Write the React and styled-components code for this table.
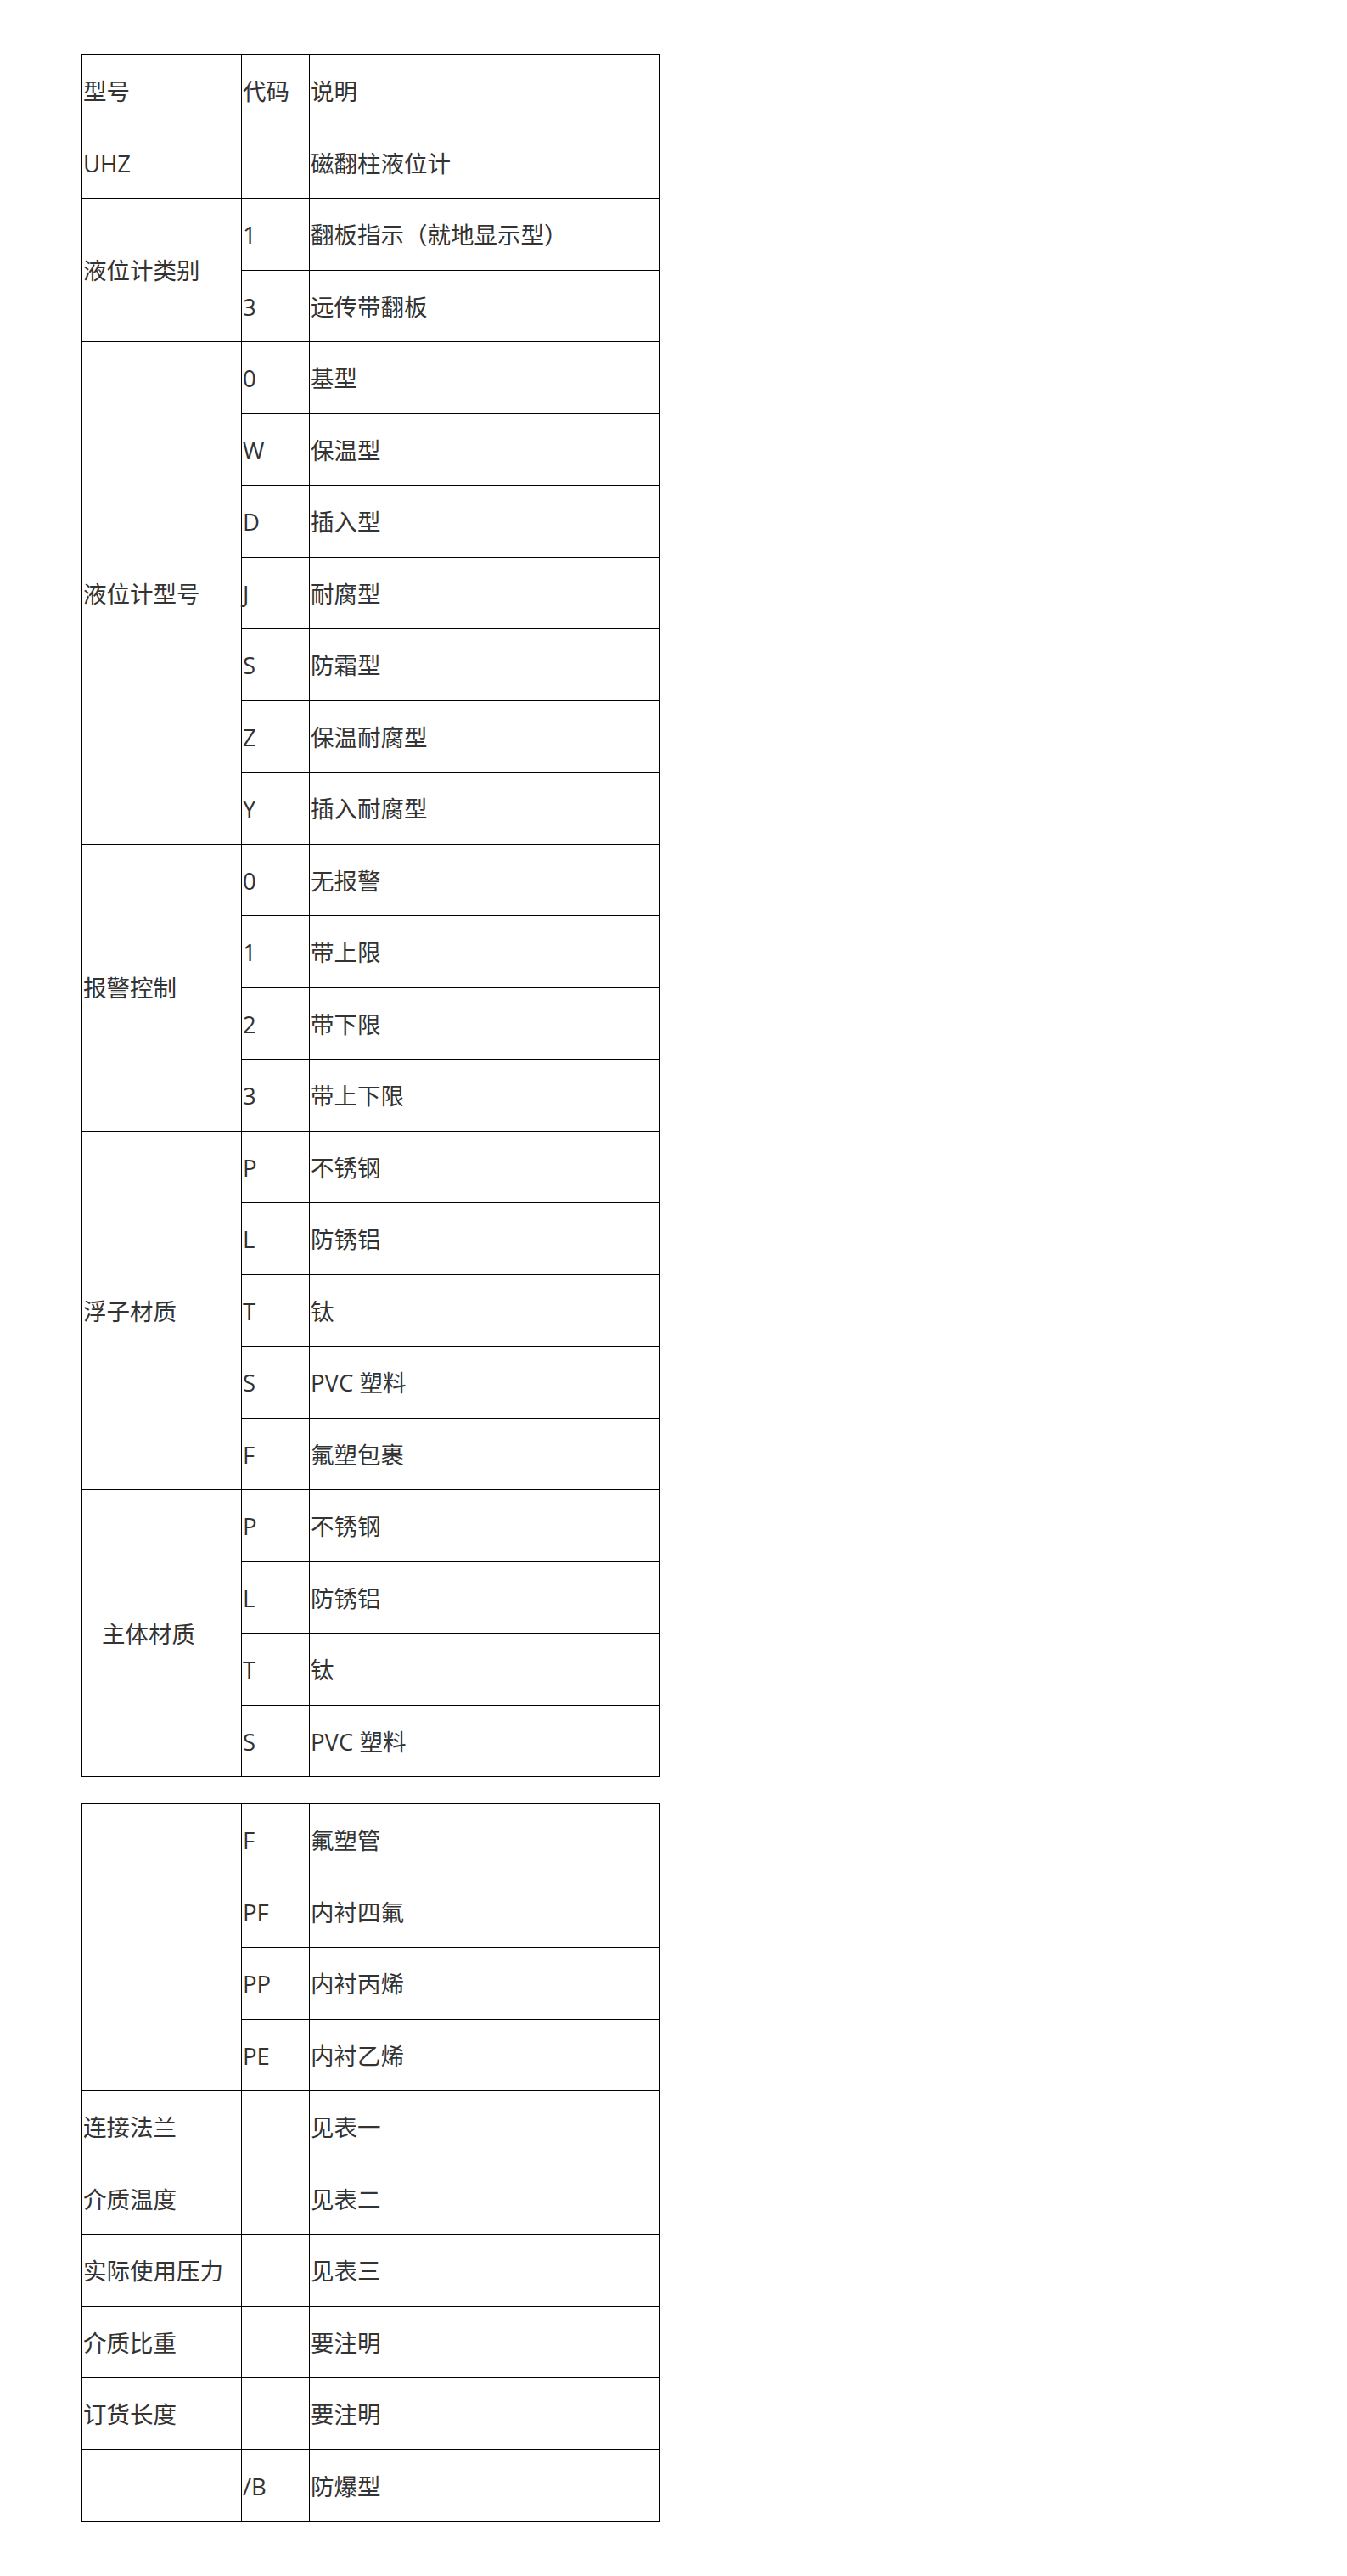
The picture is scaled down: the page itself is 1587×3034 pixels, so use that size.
import React from 'react';
import styled, { createGlobalStyle } from 'styled-components';

const GlobalStyle = createGlobalStyle`
  html, body {
    margin: 0;
    padding: 0;
    background: #ffffff;
  }
  body {
    font-family: "Open Sans", "Noto Sans CJK SC", sans-serif;
    color: #333333;
  }
`;

const Page = styled.div`
  padding: 64px 0 65px 96px;
  min-height: 3034px;
  box-sizing: border-box;
`;

const SpecTable = styled.table`
  border-collapse: collapse;
  table-layout: fixed;
  width: 681px;
  margin-bottom: 31px;
  font-size: 27.5px;
  line-height: 1.4;
`;

const Row = styled.tr`
  height: 84.5px;
`;

const Cell = styled.td`
  border: 1px solid #000000;
  padding: 3px 0 0 ${(p) => (p.$indent ? '23px' : '1px')};
  vertical-align: middle;
  white-space: nowrap;
  color: #333333;
`;

const Cols = () => (
  <colgroup>
    <col style={{ width: 188 }} />
    <col style={{ width: 80 }} />
    <col style={{ width: 413 }} />
  </colgroup>
);

// groups: label spans every option row
const mainGroups = [
  { label: '型号', options: [['代码', '说明']] },
  { label: 'UHZ', options: [['', '磁翻柱液位计']] },
  { label: '液位计类别', options: [['1', '翻板指示（就地显示型）'], ['3', '远传带翻板']] },
  {
    label: '液位计型号',
    options: [
      ['0', '基型'],
      ['W', '保温型'],
      ['D', '插入型'],
      ['J', '耐腐型'],
      ['S', '防霜型'],
      ['Z', '保温耐腐型'],
      ['Y', '插入耐腐型'],
    ],
  },
  { label: '报警控制', options: [['0', '无报警'], ['1', '带上限'], ['2', '带下限'], ['3', '带上下限']] },
  {
    label: '浮子材质',
    options: [['P', '不锈钢'], ['L', '防锈铝'], ['T', '钛'], ['S', 'PVC 塑料'], ['F', '氟塑包裹']],
  },
  {
    label: '主体材质',
    indent: true,
    options: [['P', '不锈钢'], ['L', '防锈铝'], ['T', '钛'], ['S', 'PVC 塑料']],
  },
];

const extraGroups = [
  { label: '', options: [['F', '氟塑管'], ['PF', '内衬四氟'], ['PP', '内衬丙烯'], ['PE', '内衬乙烯']] },
  { label: '连接法兰', options: [['', '见表一']] },
  { label: '介质温度', options: [['', '见表二']] },
  { label: '实际使用压力', options: [['', '见表三']] },
  { label: '介质比重', options: [['', '要注明']] },
  { label: '订货长度', options: [['', '要注明']] },
  { label: '', options: [['/B', '防爆型']] },
];

const GroupRows = ({ group }) =>
  group.options.map(([code, note], i) => (
    <Row key={i}>
      {i === 0 && (
        <Cell rowSpan={group.options.length} $indent={group.indent}>
          {group.label}
        </Cell>
      )}
      <Cell>{code}</Cell>
      <Cell>{note}</Cell>
    </Row>
  ));

const Spec = ({ groups }) => (
  <SpecTable>
    <Cols />
    <tbody>
      {groups.map((g, i) => (
        <GroupRows key={i} group={g} />
      ))}
    </tbody>
  </SpecTable>
);

export default function App() {
  return (
    <Page>
      <GlobalStyle />
      <Spec groups={mainGroups} />
      <Spec groups={extraGroups} />
    </Page>
  );
}
